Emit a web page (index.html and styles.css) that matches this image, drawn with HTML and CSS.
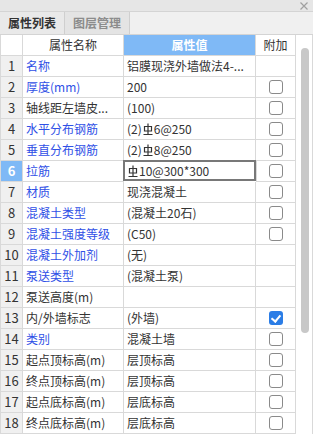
FILE: index.html
```html
<!DOCTYPE html>
<html lang="zh-CN">
<head>
    <meta charset="UTF-8">
    <title>属性列表</title>
    <link rel="stylesheet" href="styles.css">
</head>
<body>
    <div class="panel">
        <div class="titlebar">
            <svg class="close" viewBox="0 0 8 8"><path d="M0.5 0.5L7.5 7.5M7.5 0.5L0.5 7.5"/></svg>
        </div>

        <div class="tabs">
            <div class="tab active">属性列表</div>
            <div class="tab">图层管理</div>
        </div>

        <div class="body">
            <div class="grid">
                <div class="row head">
                    <div class="cell num"></div>
                    <div class="cell name">属性名称</div>
                    <div class="cell value">属性值</div>
                    <div class="cell extra">附加</div>
                </div>

                <div class="row">
                    <div class="cell num">1</div>
                    <div class="cell name link">名称</div>
                    <div class="cell value">铝膜现浇外墙做法4-...</div>
                    <div class="cell extra"></div>
                </div>
                <div class="row">
                    <div class="cell num">2</div>
                    <div class="cell name link">厚度(mm)</div>
                    <div class="cell value">200</div>
                    <div class="cell extra"><span class="check"></span></div>
                </div>
                <div class="row">
                    <div class="cell num">3</div>
                    <div class="cell name">轴线距左墙皮...</div>
                    <div class="cell value">(100)</div>
                    <div class="cell extra"><span class="check"></span></div>
                </div>
                <div class="row">
                    <div class="cell num">4</div>
                    <div class="cell name link">水平分布钢筋</div>
                    <div class="cell value">(2)<svg class="bar" viewBox="0 0 10 12"><path d="M5 0.5V11.5M1.5 3.5h7v4.5h-7zM0.5 11.5h9"/></svg>6@250</div>
                    <div class="cell extra"><span class="check"></span></div>
                </div>
                <div class="row">
                    <div class="cell num">5</div>
                    <div class="cell name link">垂直分布钢筋</div>
                    <div class="cell value">(2)<svg class="bar" viewBox="0 0 10 12"><path d="M5 0.5V11.5M1.5 3.5h7v4.5h-7zM0.5 11.5h9"/></svg>8@250</div>
                    <div class="cell extra"><span class="check"></span></div>
                </div>
                <div class="row current">
                    <div class="cell num">6</div>
                    <div class="cell name link">拉筋</div>
                    <div class="cell value editing"><svg class="bar" viewBox="0 0 10 12"><path d="M5 0.5V11.5M1.5 3.5h7v4.5h-7zM0.5 11.5h9"/></svg>10@300*300</div>
                    <div class="cell extra"><span class="check"></span></div>
                </div>
                <div class="row">
                    <div class="cell num">7</div>
                    <div class="cell name link">材质</div>
                    <div class="cell value">现浇混凝土</div>
                    <div class="cell extra"><span class="check"></span></div>
                </div>
                <div class="row">
                    <div class="cell num">8</div>
                    <div class="cell name link">混凝土类型</div>
                    <div class="cell value">(混凝土20石)</div>
                    <div class="cell extra"><span class="check"></span></div>
                </div>
                <div class="row">
                    <div class="cell num">9</div>
                    <div class="cell name link">混凝土强度等级</div>
                    <div class="cell value">(C50)</div>
                    <div class="cell extra"><span class="check"></span></div>
                </div>
                <div class="row">
                    <div class="cell num">10</div>
                    <div class="cell name link">混凝土外加剂</div>
                    <div class="cell value">(无)</div>
                    <div class="cell extra"></div>
                </div>
                <div class="row">
                    <div class="cell num">11</div>
                    <div class="cell name link">泵送类型</div>
                    <div class="cell value">(混凝土泵)</div>
                    <div class="cell extra"></div>
                </div>
                <div class="row">
                    <div class="cell num">12</div>
                    <div class="cell name">泵送高度(m)</div>
                    <div class="cell value"></div>
                    <div class="cell extra"></div>
                </div>
                <div class="row">
                    <div class="cell num">13</div>
                    <div class="cell name">内/外墙标志</div>
                    <div class="cell value">(外墙)</div>
                    <div class="cell extra"><span class="check on"></span></div>
                </div>
                <div class="row">
                    <div class="cell num">14</div>
                    <div class="cell name link">类别</div>
                    <div class="cell value">混凝土墙</div>
                    <div class="cell extra"><span class="check"></span></div>
                </div>
                <div class="row">
                    <div class="cell num">15</div>
                    <div class="cell name">起点顶标高(m)</div>
                    <div class="cell value">层顶标高</div>
                    <div class="cell extra"><span class="check"></span></div>
                </div>
                <div class="row">
                    <div class="cell num">16</div>
                    <div class="cell name">终点顶标高(m)</div>
                    <div class="cell value">层顶标高</div>
                    <div class="cell extra"><span class="check"></span></div>
                </div>
                <div class="row">
                    <div class="cell num">17</div>
                    <div class="cell name">起点底标高(m)</div>
                    <div class="cell value">层底标高</div>
                    <div class="cell extra"><span class="check"></span></div>
                </div>
                <div class="row">
                    <div class="cell num">18</div>
                    <div class="cell name">终点底标高(m)</div>
                    <div class="cell value">层底标高</div>
                    <div class="cell extra"><span class="check"></span></div>
                </div>
            </div>

            <div class="scrollbar"><div class="thumb"></div></div>
        </div>
    </div>
</body>
</html>
```

FILE: styles.css
```css
body {
    margin: 0;
    font-family: "Noto Sans CJK SC", "Noto Sans", sans-serif;
    font-size: 12px;
    color: #333333;
    background-color: #ffffff;
}
.panel {
    width: 313px;
    height: 434px;
    overflow: hidden;
    background-color: #ffffff;
}
.titlebar {
    height: 11px;
    background-color: #e6e6e6;
    border-bottom: 1px solid #d4d4d4;
    display: flex;
    justify-content: flex-end;
    align-items: center;
}
.close {
    width: 8px;
    height: 8px;
    margin-right: 5px;
    fill: none;
    stroke: #a0a0a0;
    stroke-width: 1.2;
}
.tabs {
    height: 22px;
    display: flex;
    background-color: #f0f0f0;
    border-bottom: 1px solid #d4d4d4;
}
.tab {
    width: 64px;
    border-right: 1px solid #cfcfcf;
    background-color: #e4e4e4;
    text-align: center;
    line-height: 22px;
    font-size: 12px;
    font-weight: bold;
    color: #8c8c8c;
}
.tab.active {
    background-color: #e9e9e9;
    color: #333333;
}
.body {
    display: flex;
}
.grid {
    width: 297px;
    border-left: 1px solid #d9d9d9;
    box-sizing: border-box;
}
.row {
    display: grid;
    grid-template-columns: 22px 101px 132px 40px;
    height: 21px;
}
.cell {
    border-right: 1px solid #d9d9d9;
    border-bottom: 1px solid #d9d9d9;
    line-height: 20px;
    white-space: nowrap;
    overflow: hidden;
    display: flex;
    align-items: center;
}
.num {
    justify-content: center;
    background-color: #f0f0f0;
    font-size: 13px;
}
.name {
    padding-left: 3px;
}
.value {
    padding-left: 3px;
}
.extra {
    justify-content: center;
}
.link {
    color: #2f50e6;
}
.head .name,
.head .value {
    justify-content: center;
    padding-left: 0;
}
.head .num {
    background-color: #ffffff;
}
.head .value {
    background-color: #7fb9f6;
    color: #ffffff;
    font-weight: bold;
}
.current .num {
    background-color: #7fb9f6;
    color: #ffffff;
    font-weight: bold;
}
.editing {
    box-shadow: inset 0 0 0 2px #787878;
    margin-left: -1px;
    margin-top: -1px;
    padding-left: 4px;
    border-bottom: none;
    height: 21px;
    box-sizing: border-box;
    width: 134px;
}
.bar {
    width: 10px;
    height: 12px;
    margin: 0 1px 0 1px;
    fill: none;
    stroke: #333333;
    stroke-width: 1.2;
}
.check {
    width: 12px;
    height: 12px;
    border: 1px solid #8a8a8a;
    border-radius: 3px;
    background-color: #ffffff;
    display: block;
}
.check.on {
    width: 14px;
    height: 14px;
    border: none;
    background-color: #2b7de6;
    position: relative;
}
.check.on::after {
    content: "";
    position: absolute;
    left: 4px;
    top: 2px;
    width: 4px;
    height: 7px;
    border-right: 2px solid #ffffff;
    border-bottom: 2px solid #ffffff;
    transform: rotate(40deg);
}
.scrollbar {
    width: 16px;
    height: 400px;
    border-right: 1px solid #d9d9d9;
    background-color: #ffffff;
    box-sizing: border-box;
    padding: 13px 3px 0 4px;
}
.thumb {
    width: 8px;
    height: 285px;
    border-radius: 4px;
    background-color: #c8c8c8;
}
```
